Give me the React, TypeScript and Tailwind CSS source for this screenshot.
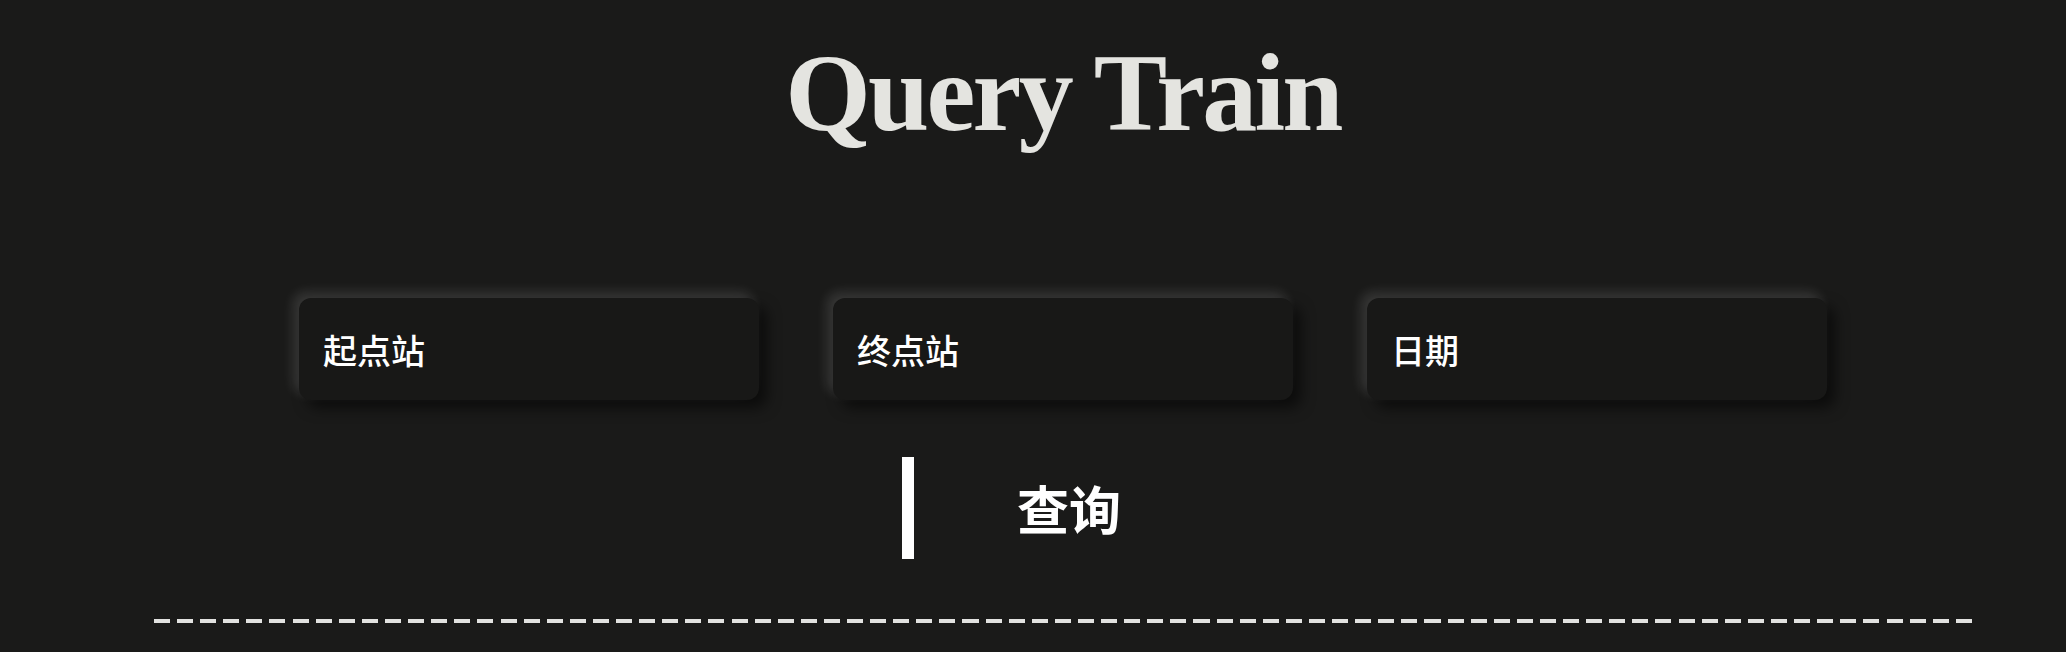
import React from "react";

const fields = ["起点站", "终点站", "日期"];

function Field({ label }: { label: string }) {
  return (
    <div className="flex h-[102px] w-[460px] items-center rounded-[12px] bg-[#181817] pl-[24px] shadow-[-6px_-6px_12px_rgba(255,255,255,0.13),8px_8px_14px_rgba(0,0,0,0.55)]">
      <span className="font-['Noto_Sans_CJK_SC',sans-serif] text-[34px] font-medium text-white">{label}</span>
    </div>
  );
}

export default function App() {
  return (
    <div className="h-[652px] w-full overflow-hidden bg-[#1a1a19] pl-[60px]">
      <div className="flex flex-col items-center">
        <h1 className="mt-[28px] font-['Liberation_Serif',serif] text-[110px] font-bold leading-[130px] tracking-[-0.025em] text-[#e4e4e0]">
          Query Train
        </h1>
        <div className="mt-[140px] flex gap-[74px]">
          {fields.map((f) => (
            <Field key={f} label={f} />
          ))}
        </div>
        <button className="mt-[57px] flex h-[102px] w-[322px] items-center justify-center border-l-[12px] border-white bg-transparent">
          <span className="font-['Noto_Sans_CJK_SC',serif] text-[52px] font-bold text-white">查询</span>
        </button>
        <div className="mt-[60px] h-[4px] w-[1818px] bg-[repeating-linear-gradient(90deg,#e2e2e0_0px,#e2e2e0_16px,transparent_16px,transparent_23.1px)]" />
      </div>
    </div>
  );
}
